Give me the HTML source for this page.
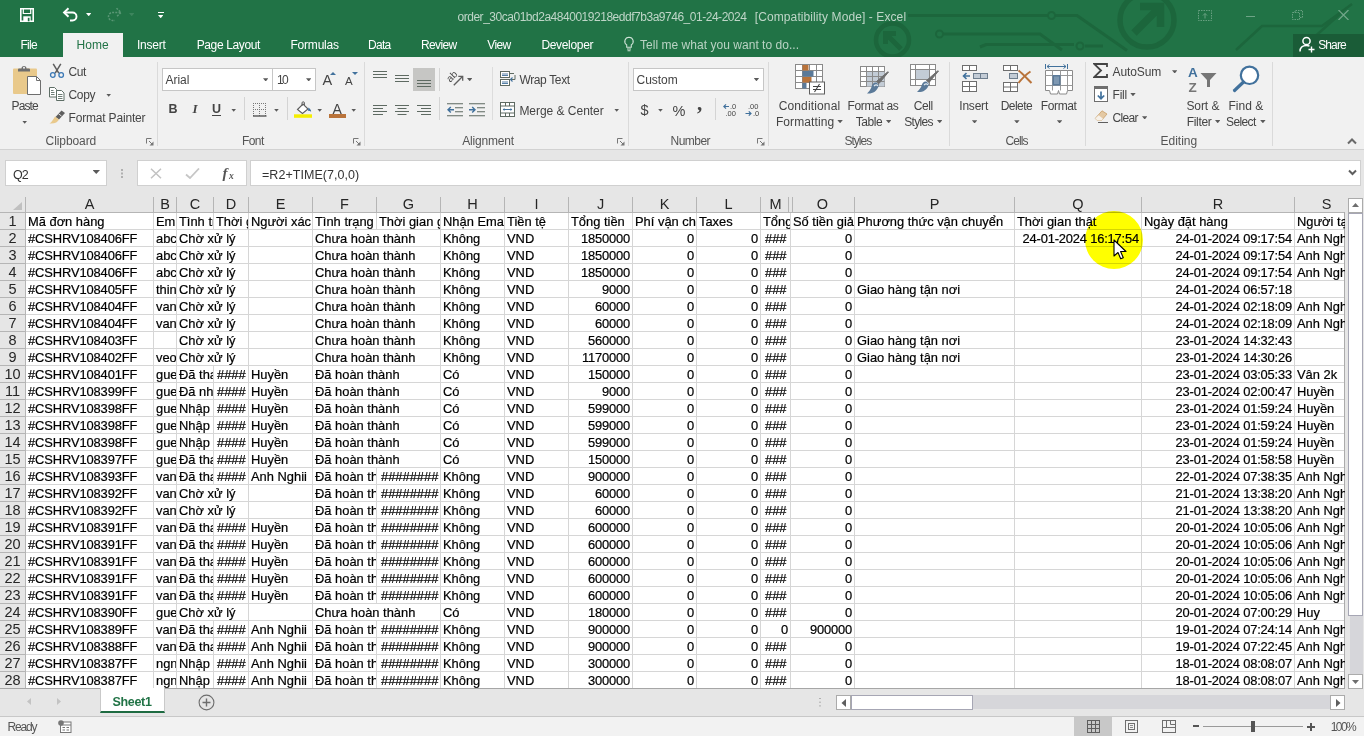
<!DOCTYPE html>
<html><head><meta charset="utf-8"><title>Excel</title>
<style>
*{box-sizing:border-box}
html,body{margin:0;padding:0}
body{width:1364px;height:736px;overflow:hidden;position:relative;background:#e6e6e6;font-family:"Liberation Sans",sans-serif;font-size:12px;color:#444}
.a{position:absolute}
.t{position:absolute;white-space:nowrap;font-size:12px;line-height:14px;color:#444}
.tc{position:absolute;white-space:nowrap;font-size:12.5px;line-height:14px;color:#444;text-align:center}
#titlebar{position:absolute;left:0;top:0;width:1364px;height:57px;background:#217346;overflow:hidden}
#ribbon{position:absolute;left:0;top:57px;width:1364px;height:93px;background:#f1f1f1;border-bottom:1px solid #d2d2d2}
.sep{position:absolute;top:62px;width:1px;height:84px;background:#dadada}
.ssep{position:absolute;width:1px;height:18px;background:#d4d4d4}
.grp{position:absolute;top:134px;font-size:12.5px;line-height:14px;color:#555;white-space:nowrap}
.dd{position:absolute;width:5.4px;height:3.2px;background:#5a5a5a;clip-path:polygon(0 0,100% 0,50% 100%)}
.box{position:absolute;background:#fff;border:1px solid #c6c6c6}
/* grid */
#grid{position:absolute;left:0;top:0;width:1364px;height:736px}
#sheet{position:absolute;left:26px;top:213px;width:1319px;height:476px;background:#fff}
.c{position:absolute;height:16px;line-height:17px;font-size:12.9px;color:#000;white-space:nowrap;overflow:hidden;padding:0 2px;-webkit-text-stroke:0.2px #000}
.ov{background:#fff}
.r{text-align:right;letter-spacing:-0.17px}
.n{letter-spacing:-0.11px}
.ch{position:absolute;top:196px;height:17px;line-height:17px;font-size:14.5px;color:#262626;text-align:center}
.rh{position:absolute;left:0;width:25px;height:17px;line-height:17px;font-size:14.5px;color:#262626;text-align:center}
.vl{position:absolute;top:213px;width:1px;height:476px;background:#d6d6d6}
.hvl{position:absolute;top:197px;width:1px;height:16px;background:#b5b5b5}
.hl{position:absolute;left:26px;width:1319px;height:1px;background:#d6d6d6}
.rhl{position:absolute;left:0;width:26px;height:1px;background:#b5b5b5}
</style></head><body>
<div id="titlebar">
<svg class="a" style="left:860px;top:0" width="504" height="57" viewBox="860 0 504 57" fill="none" stroke="#1c663c" stroke-width="3">
<circle cx="892.500" cy="40" r="16.500" stroke-width="4.500"/><path d="M901 49L885.500 33.500M885.500 44V33.500h10.500" stroke-width="5"/>
<path d="M908 15.500h140M1055 15.500h22l50 35"/><circle cx="1051.500" cy="15.500" r="3.500" stroke-width="2"/>
<path d="M943 34h97l22 16"/><circle cx="939.500" cy="34" r="3.500" stroke-width="2"/>
<path d="M980 47l6-2.500h88M1085 46h18"/><circle cx="1080" cy="46" r="3.500" stroke-width="2"/>
<circle cx="1147" cy="20" r="27" stroke-width="5.500"/><path d="M1134 33l26-26M1140 6.500h20.500v20.500" stroke-width="7.500"/>
<path d="M1236 50l26-24h60l30-22M1300 50l40-36" stroke-width="2.500"/>
</svg>
<!-- QAT -->
<svg class="a" style="left:20px;top:8px" width="14" height="14" viewBox="0 0 14 14"><path d="M.8 .8h12.400v12.400H.8z" fill="none" stroke="#fff" stroke-width="1.600"/><path d="M3.300 1v4.500h7.400V1" fill="none" stroke="#fff" stroke-width="1.200"/><rect x="3.300" y="8.300" width="7.400" height="5" fill="#fff"/><rect x="7.800" y="9.800" width="1.700" height="3.500" fill="#217346"/></svg>
<svg class="a" style="left:62px;top:7px" width="17" height="15" viewBox="0 0 17 15"><path d="M2.500 5.500h8a4 4 0 0 1 0 8H8" fill="none" stroke="#fff" stroke-width="1.900"/><path d="M6.500 1.200L2 5.500l4.500 4.300" fill="none" stroke="#fff" stroke-width="1.900"/></svg>
<div class="dd" style="left:86px;top:13px;background:#fff"></div>
<svg class="a" style="left:106px;top:7px;opacity:.25" width="17" height="15" viewBox="0 0 17 15"><path d="M14.500 5.500h-8a4 4 0 0 0 0 8H9" fill="none" stroke="#fff" stroke-width="1.500" stroke-dasharray="2 1.200"/><path d="M10.500 1.200L15 5.500l-4.500 4.300" fill="none" stroke="#fff" stroke-width="1.500" stroke-dasharray="2 1.200"/></svg>
<div class="dd" style="left:129px;top:13px;background:#fff;opacity:.13"></div>
<div class="a" style="left:158px;top:12px;width:6px;height:1px;background:#fff"></div>
<div class="dd" style="left:158px;top:15px;background:#fff"></div>
<div class="t" style="left:457.50px;top:10.00px;letter-spacing:-0.477px;color:#bfd6c8">order_30ca01bd2a4840019218eddf7b3a9746_01-24-2024</div>
<div class="t" style="left:754.80px;top:10.00px;letter-spacing:0.094px;color:#bfd6c8">[Compatibility Mode] - Excel</div>
<!-- window controls (ghosted) -->
<svg class="a" style="left:1198px;top:10px;opacity:.32" width="14" height="11" viewBox="0 0 14 11"><rect x=".5" y=".5" width="13" height="10" fill="none" stroke="#fff" stroke-dasharray="1.500 1"/><path d="M7 3.500v5M5 5.500l2-2 2 2" stroke="#fff" fill="none"/></svg>
<div class="a" style="left:1246px;top:16px;width:9px;height:1px;background:#fff;opacity:.35"></div>
<svg class="a" style="left:1292px;top:10px;opacity:.32" width="11" height="10" viewBox="0 0 11 10"><rect x=".5" y="2.500" width="7" height="7" fill="none" stroke="#fff" stroke-dasharray="1.500 1"/><path d="M3 2.500V.5h7.500v7H8" fill="none" stroke="#fff" stroke-dasharray="1.500 1"/></svg>
<svg class="a" style="left:1338px;top:10px;opacity:.36" width="11" height="10" viewBox="0 0 11 10"><path d="M.5 0l10 10M10.500 0L.5 10" stroke="#fff" stroke-width="1.200"/></svg>
<!-- tabs -->
<div class="a" style="left:63px;top:33px;width:60px;height:24px;background:#f1f1f1"></div>
<div class="t" style="left:20.50px;top:38.00px;letter-spacing:-0.721px;color:#fff">File</div>
<div class="t" style="left:76.50px;top:38.00px;letter-spacing:0.055px;color:#217346">Home</div>
<div class="t" style="left:137.00px;top:38.00px;letter-spacing:-0.236px;color:#fff">Insert</div>
<div class="t" style="left:196.70px;top:38.00px;letter-spacing:-0.375px;color:#fff">Page Layout</div>
<div class="t" style="left:290.50px;top:38.00px;letter-spacing:-0.216px;color:#fff">Formulas</div>
<div class="t" style="left:368.00px;top:38.00px;letter-spacing:-0.725px;color:#fff">Data</div>
<div class="t" style="left:421.00px;top:38.00px;letter-spacing:-0.636px;color:#fff">Review</div>
<div class="t" style="left:487.30px;top:38.00px;letter-spacing:-0.642px;color:#fff">View</div>
<div class="t" style="left:541.40px;top:38.00px;letter-spacing:-0.325px;color:#fff">Developer</div>
<svg class="a" style="left:623px;top:36px" width="12" height="16" viewBox="0 0 12 16"><path d="M6 1.200a4.200 4.200 0 0 0-2.300 7.700v2.300h4.600V8.900A4.200 4.200 0 0 0 6 1.200z" fill="none" stroke="#cfe3d7" stroke-width="1.100"/><path d="M4 13h4M4.500 14.800h3" stroke="#cfe3d7" stroke-width="1.100"/></svg>
<div class="t" style="left:640.00px;top:38.00px;letter-spacing:0.033px;color:#bad3c4">Tell me what you want to do...</div>
<div class="a" style="left:1293px;top:34px;width:71px;height:23px;background:#1a5c37"></div>
<svg class="a" style="left:1299px;top:36px" width="16" height="17" viewBox="0 0 16 17"><circle cx="7.500" cy="5" r="3.600" fill="none" stroke="#fff" stroke-width="1.500"/><path d="M1 15.500c0-4 2.600-6 6.500-6 1.200 0 2.200.2 3 .6" fill="none" stroke="#fff" stroke-width="1.500"/><path d="M12.500 10.500v6M9.500 13.500h6" stroke="#fff" stroke-width="1.400"/></svg>
<div class="t" style="left:1318.20px;top:38.00px;letter-spacing:-0.887px;color:#fff">Share</div>
</div>
<div id="ribbon"></div>
<!-- ===== Clipboard ===== -->
<svg class="a" id="ic-paste" style="left:12px;top:64px" width="30" height="32" viewBox="0 0 30 32">
<rect x="1" y="4.500" width="24" height="25.500" rx="1" fill="#e9c98b"/>
<path d="M6 7.500V5.500a1 1 0 0 1 1-1h2.500a2.500 2.500 0 0 1 5 0H17a1 1 0 0 1 1 1v2z" fill="#6e6e6e"/>
<circle cx="12" cy="3.800" r="1" fill="#f1f1f1"/>
<path d="M15.500 12.500h9l4 4V30.500h-13z" fill="#fff" stroke="#6e6e6e" stroke-width="1"/>
<path d="M24.500 12.500v4h4" fill="none" stroke="#6e6e6e" stroke-width="1"/>
</svg>
<div class="t" style="left:11.50px;top:99.00px;letter-spacing:-0.878px">Paste</div>
<div class="dd" style="left:22px;top:120.500px"></div>
<svg class="a" id="ic-cut" style="left:49px;top:63px" width="16" height="16" viewBox="0 0 16 16">
<path d="M4.200 .8l5.600 9.400M11.800 .8L6.200 10.200" stroke="#5e5e5e" stroke-width="1.500" fill="none"/>
<circle cx="3.800" cy="12" r="2.300" fill="none" stroke="#3b78b5" stroke-width="1.300"/><circle cx="12.200" cy="12" r="2.300" fill="none" stroke="#3b78b5" stroke-width="1.300"/>
</svg>
<div class="t" style="left:68.50px;top:65.00px;letter-spacing:-0.420px">Cut</div>
<svg class="a" id="ic-copy" style="left:49px;top:87px" width="16" height="14" viewBox="0 0 16 14">
<path d="M.5 .5h5l2 2v7.500h-7z" fill="#fff" stroke="#5e6e66" stroke-width="1"/><path d="M2 3.500h2.500M2 5.500h3.500M2 7.500h3.500" stroke="#5e6e66" stroke-width=".9"/>
<path d="M7.500 3.500h5l2.500 2.500v7.500H7.500z" fill="#fff" stroke="#5e6e66" stroke-width="1"/><path d="M9 7.500h4.500M9 9.500h4.500M9 11.500h4.500" stroke="#5e6e66" stroke-width=".9"/>
</svg>
<div class="t" style="left:68.50px;top:88.00px;letter-spacing:-0.305px">Copy</div>
<div class="dd" style="left:106px;top:93.500px"></div>
<svg class="a" id="ic-fp" style="left:49px;top:110px" width="17" height="15" viewBox="0 0 17 15">
<path d="M12.500 .5l3.500 2.500-6 6.500-3.500-2.500z" fill="#5e5e5e"/>
<path d="M6 6.500l4 3c-1 2.500-4.500 4.500-9.500 4 2.500-1.500 3.500-4 5.500-7z" fill="#e9c98b"/>
<path d="M9.500 3.800l3 2.200" stroke="#f1f1f1" stroke-width=".9"/>
</svg>
<div class="t" style="left:68.50px;top:111.00px;letter-spacing:-0.174px">Format Painter</div>
<div class="t" style="left:45.60px;top:134.00px;letter-spacing:-0.086px;color:#555">Clipboard</div>
<svg class="a launcher" style="left:146px;top:138px" width="8" height="8" viewBox="0 0 8 8"><path d="M.5 5.500V.5h5" fill="none" stroke="#777"/><path d="M3 3l4 4" stroke="#777"/><path d="M7.500 3.500v4h-4z" fill="#777"/></svg>
<div class="sep" style="left:157px"></div>
<!-- ===== Font ===== -->
<div class="box" style="left:162px;top:68px;width:111px;height:23px"></div>
<div class="t" style="left:165.60px;top:73.00px;letter-spacing:-0.047px">Arial</div>
<div class="dd" style="left:263px;top:78.300px"></div>
<div class="box" style="left:272px;top:68px;width:44px;height:23px"></div>
<div class="t" style="left:277.00px;top:73.00px;letter-spacing:-1.674px">10</div>
<div class="dd" style="left:306px;top:78.300px"></div>
<div class="t" style="left:322.50px;top:73.00px;font-size:14.5px">A</div>
<svg class="a" style="left:329.500px;top:72px" width="6" height="3" viewBox="0 0 6 3"><path d="M0 3l3-3 3 3z" fill="#41719c"/></svg>
<div class="t" style="left:345.00px;top:74.00px;font-size:11.5px">A</div>
<svg class="a" style="left:351.500px;top:72px" width="6" height="3" viewBox="0 0 6 3"><path d="M0 0l3 3 3-3z" fill="#41719c"/></svg>
<div class="t" style="left:168.50px;top:102.30px;font-size:12.5px;font-weight:bold">B</div>
<div class="t" style="left:192.50px;top:101.80px;font-size:13px;font-weight:bold;font-style:italic;font-family:'Liberation Serif',serif">I</div>
<div class="t" style="left:212.00px;top:102.30px;font-size:12.5px;font-weight:bold">U</div>
<div class="a" style="left:212px;top:115px;width:9px;height:1px;background:#444"></div>
<div class="dd" style="left:231px;top:108.600px"></div>
<div class="ssep" style="left:244px;top:97px;height:23px"></div>
<svg class="a" id="ic-border" style="left:253px;top:103px" width="14" height="14" viewBox="0 0 14 14"><path d="M.5 0v13M6.500 0v13M12.500 0v13M0 .5h13M0 6.500h13" stroke="#777" stroke-dasharray="1 1"/><path d="M0 13h13.500" stroke="#555" stroke-width="1.400"/></svg>
<div class="dd" style="left:273.750px;top:108.600px"></div>
<div class="ssep" style="left:287px;top:97px;height:23px"></div>
<svg class="a" id="ic-fill" style="left:294px;top:101px" width="19" height="17" viewBox="0 0 19 17"><path d="M3.500 8.500l5.500-5.500 5 5-5.500 4.500z" fill="#fff" stroke="#5e5e5e" stroke-width="1.100"/><path d="M8 5V2a1.200 1.200 0 0 1 2.400 0v2" fill="none" stroke="#5e5e5e" stroke-width="1"/><path d="M14.500 6.500c1.500 1.200 2.800 2.600 2.600 4.200-1-.8-2-1-3.200-.9z" fill="#41719c"/><rect x="0" y="13.300" width="18" height="3.500" fill="#f5ee00"/></svg>
<div class="dd" style="left:317px;top:108.600px"></div>
<div class="t" style="left:332.50px;top:101.60px;font-size:14px">A</div>
<div class="a" style="left:328.750px;top:114.300px;width:17px;height:3.700px;background:#b9733a"></div>
<div class="dd" style="left:351px;top:108.600px"></div>
<div class="t" style="left:241.90px;top:134.00px;letter-spacing:-0.526px;color:#555">Font</div>
<svg class="a launcher" style="left:353px;top:138px" width="8" height="8" viewBox="0 0 8 8"><path d="M.5 5.500V.5h5" fill="none" stroke="#777"/><path d="M3 3l4 4" stroke="#777"/><path d="M7.500 3.500v4h-4z" fill="#777"/></svg>
<div class="sep" style="left:364px"></div>
<!-- ===== Alignment ===== -->
<div class="a" style="left:413px;top:68px;width:22px;height:23px;background:#c6c6c4"></div>
<svg class="a" style="left:373px;top:70px" width="14" height="9" viewBox="0 0 14 9"><path d="M0 1.500h14M0 4.500h14M0 7.500h14" stroke="#5e6a62" stroke-width="1"/></svg>
<svg class="a" style="left:395px;top:74px" width="14" height="9" viewBox="0 0 14 9"><path d="M0 1.500h14M0 4.500h14M0 7.500h14" stroke="#5e6a62" stroke-width="1"/></svg>
<svg class="a" style="left:417px;top:79px" width="14" height="9" viewBox="0 0 14 9"><path d="M0 1.500h14M0 4.500h14M0 7.500h14" stroke="#5e6a62" stroke-width="1"/></svg>
<div class="ssep" style="left:439px;top:68px;height:23px"></div>
<svg class="a" id="ic-orient" style="left:446px;top:69px" width="19" height="19" viewBox="0 0 19 19"><text x="0" y="0" font-size="10" fill="#4a4a4a" transform="translate(4.200 13.800) rotate(-45)" font-family="Liberation Sans">ab</text><path d="M7.800 16.200L16.500 7.500" stroke="#5e5e5e" stroke-width="1.300"/><path d="M12.300 7.300l4.400 0 0 4.400" fill="none" stroke="#5e5e5e" stroke-width="1.300"/></svg>
<div class="dd" style="left:467px;top:78px"></div>
<svg class="a" id="ic-wrap" style="left:500px;top:71px" width="16" height="15" viewBox="0 0 16 15"><rect x=".5" y=".5" width="9" height="6" fill="#fff" stroke="#5e6a62"/><rect x=".5" y="8.500" width="9" height="6" fill="#fff" stroke="#5e6a62"/><path d="M2 3h6M2 4.500h6M2 11h6M2 12.500h6" stroke="#41719c" stroke-width=".9"/><path d="M9.500 2.500h4.500M15 4v4.500h-4.500" fill="none" stroke="#5e6a62" stroke-width="1"/><path d="M12.500 6.500l-2 2 2 2" fill="none" stroke="#41719c" stroke-width="1.100"/></svg>
<div class="t" style="left:519.40px;top:73.00px;letter-spacing:-0.358px">Wrap Text</div>
<svg class="a" style="left:373px;top:104px" width="14" height="12" viewBox="0 0 14 12"><path d="M0 1.500h14M0 4.500h10M0 7.500h14M0 10.500h10" stroke="#5e6a62" stroke-width="1"/></svg>
<svg class="a" style="left:395px;top:104px" width="14" height="12" viewBox="0 0 14 12"><path d="M0 1.500h14M2.500 4.500h9M0 7.500h14M2.500 10.500h9" stroke="#5e6a62" stroke-width="1"/></svg>
<svg class="a" style="left:417px;top:104px" width="14" height="12" viewBox="0 0 14 12"><path d="M0 1.500h14M4 4.500h10M0 7.500h14M4 10.500h10" stroke="#5e6a62" stroke-width="1"/></svg>
<div class="ssep" style="left:439px;top:97px;height:23px"></div>
<svg class="a" style="left:447px;top:103px" width="16" height="14" viewBox="0 0 16 14"><path d="M0 .8h16M8 4.800h8M8 8.800h8M0 12.800h16" stroke="#5e6a62" stroke-width="1.100"/><path d="M7 6.800H1M3.800 4L1 6.800l2.800 2.800" fill="none" stroke="#41719c" stroke-width="1.400"/></svg>
<svg class="a" style="left:469px;top:103px" width="16" height="14" viewBox="0 0 16 14"><path d="M0 .8h16M8 4.800h8M8 8.800h8M0 12.800h16" stroke="#5e6a62" stroke-width="1.100"/><path d="M0 6.800h6M3.200 4L6 6.800 3.200 9.600" fill="none" stroke="#41719c" stroke-width="1.400"/></svg>
<div class="ssep" style="left:492px;top:67px;height:53px;background:#dcdcdc"></div>
<svg class="a" id="ic-merge" style="left:500px;top:102px" width="15" height="15" viewBox="0 0 15 15"><rect x=".5" y=".5" width="14" height="14" fill="#fff" stroke="#5e6a62"/><path d="M.5 4h14M.5 11h14M5.500 .5v3.500M9.500 11v3.500M5.500 11v3.500M9.500 .5v3.500" stroke="#5e6a62"/><path d="M3 7.500h9" stroke="#41719c"/><path d="M4.500 6l-1.800 1.500 1.800 1.500zM10.500 6l1.800 1.500-1.800 1.500z" fill="#41719c"/></svg>
<div class="t" style="left:519.40px;top:104.00px;letter-spacing:-0.027px">Merge &amp; Center</div>
<div class="dd" style="left:614px;top:108.600px"></div>
<div class="t" style="left:462.25px;top:134.00px;letter-spacing:-0.191px;color:#555">Alignment</div>
<svg class="a launcher" style="left:617px;top:138px" width="8" height="8" viewBox="0 0 8 8"><path d="M.5 5.500V.5h5" fill="none" stroke="#777"/><path d="M3 3l4 4" stroke="#777"/><path d="M7.500 3.500v4h-4z" fill="#777"/></svg>
<div class="sep" style="left:628px"></div>
<!-- ===== Number ===== -->
<div class="box" style="left:633px;top:68px;width:131px;height:23px"></div>
<div class="t" style="left:636.50px;top:73.00px;letter-spacing:-0.020px">Custom</div>
<div class="dd" style="left:753.750px;top:78px"></div>
<div class="t" style="left:640.60px;top:102.50px;font-size:14.5px">$</div>
<div class="dd" style="left:657.750px;top:108.600px"></div>
<div class="t" style="left:672.50px;top:104.00px;font-size:14.5px">%</div>
<div class="t" style="left:697.00px;top:95.50px;font-size:21px;font-weight:bold;font-family:'Liberation Serif',serif">,</div>
<div class="ssep" style="left:715px;top:98px;height:22px"></div>
<svg class="a" id="ic-dec1" style="left:723px;top:103px" width="15" height="14" viewBox="0 0 15 14"><text x="7" y="6" font-size="7.500" fill="#444" font-family="Liberation Sans">.0</text><text x="2.500" y="13" font-size="7.500" fill="#444" font-family="Liberation Sans">.00</text><path d="M6 3.500H.8M3 1.300L.8 3.500 3 5.700" fill="none" stroke="#41719c" stroke-width="1.200"/></svg>
<svg class="a" id="ic-dec2" style="left:745px;top:103px" width="15" height="14" viewBox="0 0 15 14"><text x="3" y="6" font-size="7.500" fill="#444" font-family="Liberation Sans">.00</text><text x="8" y="13" font-size="7.500" fill="#444" font-family="Liberation Sans">.0</text><path d="M.5 10.500h5.500M3.800 8.300L6 10.500 3.800 12.700" fill="none" stroke="#41719c" stroke-width="1.200"/></svg>
<div class="t" style="left:670.60px;top:134.00px;letter-spacing:-0.537px;color:#555">Number</div>
<svg class="a launcher" style="left:756.500px;top:138px" width="8" height="8" viewBox="0 0 8 8"><path d="M.5 5.500V.5h5" fill="none" stroke="#777"/><path d="M3 3l4 4" stroke="#777"/><path d="M7.500 3.500v4h-4z" fill="#777"/></svg>
<div class="sep" style="left:768px"></div>
<!-- ===== Styles ===== -->
<svg class="a" id="ic-cf" style="left:795px;top:64px" width="31" height="31" viewBox="0 0 31 31"><rect x=".5" y=".5" width="27" height="24" fill="#fff" stroke="#8a8a8a"/><path d="M.5 6.500h27M.5 12.500h27M.5 18.500h27M7.500 .5v24M14.500 .5v24M21.500 .5v24" stroke="#8a8a8a"/><rect x="7.500" y="1" width="6" height="5.500" fill="#b9733a"/><rect x="7.500" y="7" width="11" height="5.500" fill="#5b7a99"/><rect x="7.500" y="13" width="9" height="5.500" fill="#b9733a"/><rect x="7.500" y="19" width="4" height="5.500" fill="#5b7a99"/><rect x="14.500" y="18" width="15" height="12" fill="#fff" stroke="#5e5e5e"/><path d="M18 22.500h8M18 25.500h8M24.500 20l-5 8" stroke="#444" stroke-width="1.100"/></svg>
<div class="t" style="left:778.65px;top:99.00px;letter-spacing:0.148px">Conditional</div>
<div class="t" style="left:775.90px;top:115.00px;letter-spacing:0.102px">Formatting</div>
<div class="dd" style="left:837.400px;top:120px"></div>
<svg class="a" id="ic-fat" style="left:860px;top:66px" width="30" height="30" viewBox="0 0 30 30"><rect x=".5" y=".5" width="24" height="20" fill="#fff" stroke="#8a8a8a"/><rect x="6.500" y="5.500" width="18" height="15" fill="#c3ccd6"/><path d="M.5 5.500h24M.5 10.500h24M.5 15.500h24M6.500 .5v20M12.500 .5v20M18.500 .5v20" stroke="#8a8a8a"/><path d="M28.500 6L19 17.500l-2.500-2L27.500 6z" fill="#6e6e6e" stroke="#6e6e6e"/><path d="M16.500 16.500c-2.500-.5-4.500 1.500-5 4.500-.8 2.500-2.500 4.500-4.500 6.500 5 .5 10-1.500 12-8.500z" fill="#5b7a99"/><path d="M14 20c1.500-1.500 3-1.500 4 0" stroke="#dfe7ee" fill="none" stroke-width="1.200"/></svg>
<div class="t" style="left:847.50px;top:99.00px;letter-spacing:-0.351px">Format as</div>
<div class="t" style="left:855.80px;top:115.00px;letter-spacing:-0.453px">Table</div>
<div class="dd" style="left:886px;top:120px"></div>
<svg class="a" id="ic-cs" style="left:910px;top:64px" width="30" height="30" viewBox="0 0 30 30"><rect x=".5" y=".5" width="25" height="21" fill="#fff" stroke="#8a8a8a"/><path d="M.5 5.500h25M.5 15.500h25M5.500 .5v21M19.500 .5v21" stroke="#8a8a8a"/><rect x="5.500" y="5.500" width="14" height="10" fill="#c3ccd6" stroke="#8a8a8a"/><path d="M28.500 7L19 18.500l-2.500-2L27.500 7z" fill="#6e6e6e" stroke="#6e6e6e"/><path d="M16.500 17.500c-2.500-.5-4.500 1.500-5 4.500-.8 2-2.500 4-4.500 6 5 .5 10-1 12-8z" fill="#5b7a99"/><path d="M14 21c1.500-1.500 3-1.500 4 0" stroke="#dfe7ee" fill="none" stroke-width="1.200"/></svg>
<div class="t" style="left:913.80px;top:99.00px;letter-spacing:-0.402px">Cell</div>
<div class="t" style="left:904.30px;top:115.00px;letter-spacing:-0.696px">Styles</div>
<div class="dd" style="left:937px;top:120px"></div>
<div class="t" style="left:844.40px;top:134.00px;letter-spacing:-0.966px;color:#555">Styles</div>
<div class="sep" style="left:949px"></div>
<!-- ===== Cells ===== -->
<svg class="a" id="ic-ins" style="left:962px;top:65px" width="27" height="28" viewBox="0 0 27 28"><rect x=".5" y=".5" width="14" height="5" fill="#fff" stroke="#6e6e6e"/><path d="M7.500 .5v5" stroke="#6e6e6e"/><rect x="11.500" y="8.500" width="14" height="5" fill="#c3ccd6" stroke="#6e7e8e"/><path d="M18.500 8.500v5" stroke="#6e7e8e"/><rect x=".5" y="16.500" width="14" height="10" fill="#fff" stroke="#6e6e6e"/><path d="M.5 21.500h14M7.500 16.500v10" stroke="#6e6e6e"/><path d="M8 11H1.500M4.500 8L1.500 11l3 3" fill="none" stroke="#41719c" stroke-width="1.600"/></svg>
<div class="t" style="left:959.30px;top:99.00px;letter-spacing:-0.216px">Insert</div>
<div class="dd" style="left:971.900px;top:120.300px"></div>
<svg class="a" id="ic-del" style="left:1003px;top:65px" width="30" height="28" viewBox="0 0 30 28"><rect x=".5" y=".5" width="14" height="5" fill="#fff" stroke="#6e6e6e"/><path d="M7.500 .5v5" stroke="#6e6e6e"/><rect x="6.500" y="8.500" width="8" height="5" fill="#c3ccd6" stroke="#6e7e8e"/><rect x=".5" y="17.500" width="14" height="9" fill="#fff" stroke="#6e6e6e"/><path d="M.5 22h14M7.500 17.500v9" stroke="#6e6e6e"/><path d="M15.500 5.500c4 3 8 7.500 13 12.500M27.500 6.500c-4 2.500-8 6.500-12 11.500" stroke="#b9733a" stroke-width="2" fill="none"/></svg>
<div class="t" style="left:1000.70px;top:99.00px;letter-spacing:-0.543px">Delete</div>
<div class="dd" style="left:1014.200px;top:120.300px"></div>
<svg class="a" id="ic-fmt" style="left:1045px;top:64px" width="28" height="31" viewBox="0 0 28 31"><path d="M.5 0v5M22.500 0v5M2 2.500h19M4.500 .5l-2.500 2 2.500 2M18.500 .5l2.500 2-2.500 2" fill="none" stroke="#41719c" stroke-width="1"/><path d="M.5 6.500h27v20h-5l-1 3.500h-7l-1-3.500h-0l-1 3.500h-7l-1-3.500H.5z" fill="#fff" stroke="#8a8a8a"/><path d="M.5 11.500h27M.5 21.500h27M7.500 6.500v20M15.500 6.500v20M22.500 6.500v20" stroke="#9a9a9a"/><rect x="7.500" y="11" width="8" height="10.500" fill="#5b7a99"/><rect x="9" y="12.500" width="5" height="7.500" fill="#7e98b2"/></svg>
<div class="t" style="left:1040.80px;top:99.00px;letter-spacing:-0.374px">Format</div>
<div class="dd" style="left:1056.900px;top:120.300px"></div>
<div class="t" style="left:1005.60px;top:134.00px;letter-spacing:-0.918px;color:#555">Cells</div>
<div class="sep" style="left:1085px"></div>
<!-- ===== Editing ===== -->
<svg class="a" id="ic-sum" style="left:1093px;top:63px" width="15" height="15" viewBox="0 0 15 15"><path d="M14 4V1H1.200L8 7.500 1.200 14H14v-3" fill="none" stroke="#444" stroke-width="1.800"/></svg>
<div class="t" style="left:1112.60px;top:65.00px;letter-spacing:-0.111px">AutoSum</div>
<div class="dd" style="left:1172px;top:70.300px"></div>
<svg class="a" id="ic-fillb" style="left:1094px;top:86px" width="14" height="16" viewBox="0 0 14 16"><rect x=".5" y=".5" width="13" height="15" fill="#fff" stroke="#6e6e6e"/><rect x=".5" y=".5" width="13" height="2.500" fill="#6e6e6e"/><path d="M7 5.500v7M3.800 9.500L7 12.700l3.200-3.200" fill="none" stroke="#41719c" stroke-width="1.700"/></svg>
<div class="t" style="left:1112.60px;top:88.00px;letter-spacing:-0.254px">Fill</div>
<div class="dd" style="left:1130.300px;top:93px"></div>
<svg class="a" id="ic-clear" style="left:1094px;top:110px" width="15" height="13" viewBox="0 0 15 13"><path d="M8 .8l5 3.200-5.500 6.500H3.500L1.200 8.500z" fill="#e4c9a4" stroke="#c9a06a" stroke-width=".8"/><path d="M1.200 8.500l2.300 2h4l1.500-1.800-4.300-3.400z" fill="#f6f1ea"/><path d="M4 12.500h10" stroke="#5e5e5e" stroke-width="1"/></svg>
<div class="t" style="left:1112.60px;top:111.00px;letter-spacing:-0.670px">Clear</div>
<div class="dd" style="left:1142px;top:116.200px"></div>
<svg class="a" id="ic-sort" style="left:1187px;top:64px" width="32" height="30" viewBox="0 0 32 30"><text x="1" y="13" font-size="13.500" font-weight="bold" fill="#41719c" font-family="Liberation Sans">A</text><text x="1.500" y="28" font-size="13.500" font-weight="bold" fill="#767676" font-family="Liberation Sans">Z</text><path d="M13.500 9h16l-6.500 7v7h-3v-7z" fill="#767676"/></svg>
<div class="t" style="left:1186.40px;top:99.00px;letter-spacing:-0.068px">Sort &amp;</div>
<div class="t" style="left:1186.70px;top:115.00px;letter-spacing:-0.314px">Filter</div>
<div class="dd" style="left:1215px;top:120px"></div>
<svg class="a" id="ic-find" style="left:1232px;top:64px" width="29" height="29" viewBox="0 0 29 29"><circle cx="17.500" cy="11.300" r="8.700" fill="#fff" stroke="#41719c" stroke-width="2.200"/><path d="M11.500 18L2.500 26.500" stroke="#41719c" stroke-width="3.200" stroke-linecap="round"/></svg>
<div class="t" style="left:1228.50px;top:99.00px;letter-spacing:0.024px">Find &amp;</div>
<div class="t" style="left:1226.00px;top:115.00px;letter-spacing:-0.604px">Select</div>
<div class="dd" style="left:1260.200px;top:120px"></div>
<div class="t" style="left:1160.60px;top:134.00px;letter-spacing:-0.036px;color:#555">Editing</div>
<div class="sep" style="left:1272px"></div>
<svg class="a" style="left:1346.500px;top:137px" width="10" height="8" viewBox="0 0 10 8"><path d="M1 6.500l4-4 4 4" fill="none" stroke="#6a6a6a" stroke-width="2"/></svg>
<!-- formula bar -->
<div class="box" style="left:5px;top:160px;width:102px;height:26px;border-color:#d0d0d0"></div>
<div class="t" style="left:12.90px;top:168.00px;letter-spacing:-0.923px;font-size:12.5px;color:#333">Q2</div>
<div class="dd" style="left:92.500px;top:170px;width:7.500px;height:4px"></div>
<div class="a" style="left:121px;top:169px;width:1.500px;height:1.500px;background:#b0b0b0;box-shadow:0 3.500px 0 #b0b0b0,0 7px 0 #b0b0b0"></div>
<div class="box" style="left:137px;top:160px;width:110px;height:26px;border-color:#d0d0d0"></div>
<svg class="a" style="left:150px;top:168px" width="12" height="11" viewBox="0 0 12 11"><path d="M1 .8l10 9.400M11 .8L1 10.200" stroke="#c2c2c2" stroke-width="1.500"/></svg>
<svg class="a" style="left:185px;top:168px" width="15" height="11" viewBox="0 0 15 11"><path d="M1 6.500l4 3.500 9-9.500" fill="none" stroke="#c6c6c6" stroke-width="1.800"/></svg>
<div class="t" style="left:222.50px;top:166.00px;font-size:15px;font-weight:bold;font-style:italic;color:#555;font-family:'Liberation Serif',serif">f</div>
<div class="t" style="left:229.00px;top:168.80px;font-size:9.5px;font-weight:bold;font-style:italic;color:#555;font-family:'Liberation Serif',serif">x</div>
<div class="box" style="left:250px;top:160px;width:1111px;height:26px;border-color:#d0d0d0"></div>
<div class="t" style="left:262.00px;top:168.00px;letter-spacing:0.043px;font-size:12.5px;color:#333">=R2+TIME(7,0,0)</div>
<svg class="a" style="left:1348px;top:168.500px" width="9" height="7" viewBox="0 0 9 7"><path d="M1 1.500l3.500 3.500 3.500-3.500" fill="none" stroke="#5e5e5e" stroke-width="2"/></svg>
<div id="grid">
<div id="sheet"></div>
<div class="vl" style="left:153px"></div>
<div class="hvl" style="left:153px"></div>
<div class="vl" style="left:176px"></div>
<div class="hvl" style="left:176px"></div>
<div class="vl" style="left:213px"></div>
<div class="hvl" style="left:213px"></div>
<div class="vl" style="left:248px"></div>
<div class="hvl" style="left:248px"></div>
<div class="vl" style="left:312px"></div>
<div class="hvl" style="left:312px"></div>
<div class="vl" style="left:376px"></div>
<div class="hvl" style="left:376px"></div>
<div class="vl" style="left:440px"></div>
<div class="hvl" style="left:440px"></div>
<div class="vl" style="left:504px"></div>
<div class="hvl" style="left:504px"></div>
<div class="vl" style="left:568px"></div>
<div class="hvl" style="left:568px"></div>
<div class="vl" style="left:632px"></div>
<div class="hvl" style="left:632px"></div>
<div class="vl" style="left:696px"></div>
<div class="hvl" style="left:696px"></div>
<div class="vl" style="left:760px"></div>
<div class="hvl" style="left:760px"></div>
<div class="vl" style="left:790px"></div>
<div class="hvl" style="left:788px"></div>
<div class="hvl" style="left:792px"></div>
<div class="vl" style="left:854px"></div>
<div class="hvl" style="left:854px"></div>
<div class="vl" style="left:1014px"></div>
<div class="hvl" style="left:1014px"></div>
<div class="vl" style="left:1141px"></div>
<div class="hvl" style="left:1141px"></div>
<div class="vl" style="left:1294px"></div>
<div class="hvl" style="left:1294px"></div>
<div class="vl" style="left:1345px"></div>
<div class="hvl" style="left:1345px"></div>
<div class="hl" style="top:229px"></div>
<div class="rhl" style="top:229px"></div>
<div class="hl" style="top:246px"></div>
<div class="rhl" style="top:246px"></div>
<div class="hl" style="top:263px"></div>
<div class="rhl" style="top:263px"></div>
<div class="hl" style="top:280px"></div>
<div class="rhl" style="top:280px"></div>
<div class="hl" style="top:297px"></div>
<div class="rhl" style="top:297px"></div>
<div class="hl" style="top:314px"></div>
<div class="rhl" style="top:314px"></div>
<div class="hl" style="top:331px"></div>
<div class="rhl" style="top:331px"></div>
<div class="hl" style="top:348px"></div>
<div class="rhl" style="top:348px"></div>
<div class="hl" style="top:365px"></div>
<div class="rhl" style="top:365px"></div>
<div class="hl" style="top:382px"></div>
<div class="rhl" style="top:382px"></div>
<div class="hl" style="top:399px"></div>
<div class="rhl" style="top:399px"></div>
<div class="hl" style="top:416px"></div>
<div class="rhl" style="top:416px"></div>
<div class="hl" style="top:433px"></div>
<div class="rhl" style="top:433px"></div>
<div class="hl" style="top:450px"></div>
<div class="rhl" style="top:450px"></div>
<div class="hl" style="top:467px"></div>
<div class="rhl" style="top:467px"></div>
<div class="hl" style="top:484px"></div>
<div class="rhl" style="top:484px"></div>
<div class="hl" style="top:501px"></div>
<div class="rhl" style="top:501px"></div>
<div class="hl" style="top:518px"></div>
<div class="rhl" style="top:518px"></div>
<div class="hl" style="top:535px"></div>
<div class="rhl" style="top:535px"></div>
<div class="hl" style="top:552px"></div>
<div class="rhl" style="top:552px"></div>
<div class="hl" style="top:569px"></div>
<div class="rhl" style="top:569px"></div>
<div class="hl" style="top:586px"></div>
<div class="rhl" style="top:586px"></div>
<div class="hl" style="top:603px"></div>
<div class="rhl" style="top:603px"></div>
<div class="hl" style="top:620px"></div>
<div class="rhl" style="top:620px"></div>
<div class="hl" style="top:637px"></div>
<div class="rhl" style="top:637px"></div>
<div class="hl" style="top:654px"></div>
<div class="rhl" style="top:654px"></div>
<div class="hl" style="top:671px"></div>
<div class="rhl" style="top:671px"></div>
<div class="hl" style="top:688px"></div>
<div class="rhl" style="top:688px"></div>
<svg class="a" style="left:13px;top:201.500px" width="9" height="8" viewBox="0 0 9 8"><path d="M9 0v8H0z" fill="#c0c0c0"/></svg>
<div class="a" style="left:25px;top:197px;width:1px;height:492px;background:#b5b5b5"></div>
<div class="a" style="left:0;top:212px;width:1345px;height:1px;background:#b5b5b5"></div>
<div class="a" style="left:1344px;top:212px;width:1px;height:477px;background:#ababab"></div>
<div class="a" style="left:0;top:688px;width:1346px;height:1px;background:#a6a6a6"></div>
<!-- highlight circle -->
<div class="a" style="left:1085px;top:211px;width:58px;height:58px;border-radius:50%;background:#ffff00;mix-blend-mode:multiply"></div>

<div class="c" style="left:26px;top:213px;width:127px">Mã đơn hàng</div>
<div class="c" style="left:154px;top:213px;width:22px">Em</div>
<div class="c" style="left:177px;top:213px;width:36px">Tình tr</div>
<div class="c" style="left:214px;top:213px;width:34px">Thời g</div>
<div class="c" style="left:249px;top:213px;width:63px">Người xác</div>
<div class="c" style="left:313px;top:213px;width:63px">Tình trạng</div>
<div class="c" style="left:377px;top:213px;width:63px">Thời gian g</div>
<div class="c" style="left:441px;top:213px;width:63px">Nhận Ema</div>
<div class="c" style="left:505px;top:213px;width:63px">Tiền tệ</div>
<div class="c" style="left:569px;top:213px;width:63px">Tổng tiền</div>
<div class="c" style="left:633px;top:213px;width:63px">Phí vận ch</div>
<div class="c" style="left:697px;top:213px;width:63px">Taxes</div>
<div class="c" style="left:761px;top:213px;width:29px">Tổng</div>
<div class="c" style="left:791px;top:213px;width:63px">Số tiền giả</div>
<div class="c" style="left:855px;top:213px;width:159px">Phương thức vận chuyển</div>
<div class="c" style="left:1015px;top:213px;width:126px">Thời gian thật</div>
<div class="c" style="left:1142px;top:213px;width:152px">Ngày đặt hàng</div>
<div class="c" style="left:1295px;top:213px;width:50px">Người tạ</div>
<div class="c n" style="left:26px;top:230px;width:127px">#CSHRV108406FF</div>
<div class="c" style="left:154px;top:230px;width:22px">abc</div>
<div class="c ov" style="left:177px;top:230px;width:71px">Chờ xử lý</div>
<div class="c ov" style="left:313px;top:230px;width:127px">Chưa hoàn thành</div>
<div class="c" style="left:441px;top:230px;width:63px">Không</div>
<div class="c" style="left:505px;top:230px;width:63px">VND</div>
<div class="c r" style="left:569px;top:230px;width:63px">1850000</div>
<div class="c r" style="left:633px;top:230px;width:63px">0</div>
<div class="c r" style="left:697px;top:230px;width:63px">0</div>
<div class="c" style="left:763px;top:230px;width:27px">###</div>
<div class="c r" style="left:791px;top:230px;width:63px">0</div>
<div class="c r" style="left:1142px;top:230px;width:152px">24-01-2024 09:17:54</div>
<div class="c" style="left:1295px;top:230px;width:50px">Anh Ngh</div>
<div class="c n" style="left:26px;top:247px;width:127px">#CSHRV108406FF</div>
<div class="c" style="left:154px;top:247px;width:22px">abc</div>
<div class="c ov" style="left:177px;top:247px;width:71px">Chờ xử lý</div>
<div class="c ov" style="left:313px;top:247px;width:127px">Chưa hoàn thành</div>
<div class="c" style="left:441px;top:247px;width:63px">Không</div>
<div class="c" style="left:505px;top:247px;width:63px">VND</div>
<div class="c r" style="left:569px;top:247px;width:63px">1850000</div>
<div class="c r" style="left:633px;top:247px;width:63px">0</div>
<div class="c r" style="left:697px;top:247px;width:63px">0</div>
<div class="c" style="left:763px;top:247px;width:27px">###</div>
<div class="c r" style="left:791px;top:247px;width:63px">0</div>
<div class="c r" style="left:1142px;top:247px;width:152px">24-01-2024 09:17:54</div>
<div class="c" style="left:1295px;top:247px;width:50px">Anh Ngh</div>
<div class="c n" style="left:26px;top:264px;width:127px">#CSHRV108406FF</div>
<div class="c" style="left:154px;top:264px;width:22px">abc</div>
<div class="c ov" style="left:177px;top:264px;width:71px">Chờ xử lý</div>
<div class="c ov" style="left:313px;top:264px;width:127px">Chưa hoàn thành</div>
<div class="c" style="left:441px;top:264px;width:63px">Không</div>
<div class="c" style="left:505px;top:264px;width:63px">VND</div>
<div class="c r" style="left:569px;top:264px;width:63px">1850000</div>
<div class="c r" style="left:633px;top:264px;width:63px">0</div>
<div class="c r" style="left:697px;top:264px;width:63px">0</div>
<div class="c" style="left:763px;top:264px;width:27px">###</div>
<div class="c r" style="left:791px;top:264px;width:63px">0</div>
<div class="c r" style="left:1142px;top:264px;width:152px">24-01-2024 09:17:54</div>
<div class="c" style="left:1295px;top:264px;width:50px">Anh Ngh</div>
<div class="c n" style="left:26px;top:281px;width:127px">#CSHRV108405FF</div>
<div class="c" style="left:154px;top:281px;width:22px">thin</div>
<div class="c ov" style="left:177px;top:281px;width:71px">Chờ xử lý</div>
<div class="c ov" style="left:313px;top:281px;width:127px">Chưa hoàn thành</div>
<div class="c" style="left:441px;top:281px;width:63px">Không</div>
<div class="c" style="left:505px;top:281px;width:63px">VND</div>
<div class="c r" style="left:569px;top:281px;width:63px">9000</div>
<div class="c r" style="left:633px;top:281px;width:63px">0</div>
<div class="c r" style="left:697px;top:281px;width:63px">0</div>
<div class="c" style="left:763px;top:281px;width:27px">###</div>
<div class="c r" style="left:791px;top:281px;width:63px">0</div>
<div class="c" style="left:855px;top:281px;width:159px">Giao hàng tận nơi</div>
<div class="c r" style="left:1142px;top:281px;width:152px">24-01-2024 06:57:18</div>
<div class="c n" style="left:26px;top:298px;width:127px">#CSHRV108404FF</div>
<div class="c" style="left:154px;top:298px;width:22px">van</div>
<div class="c ov" style="left:177px;top:298px;width:71px">Chờ xử lý</div>
<div class="c ov" style="left:313px;top:298px;width:127px">Chưa hoàn thành</div>
<div class="c" style="left:441px;top:298px;width:63px">Không</div>
<div class="c" style="left:505px;top:298px;width:63px">VND</div>
<div class="c r" style="left:569px;top:298px;width:63px">60000</div>
<div class="c r" style="left:633px;top:298px;width:63px">0</div>
<div class="c r" style="left:697px;top:298px;width:63px">0</div>
<div class="c" style="left:763px;top:298px;width:27px">###</div>
<div class="c r" style="left:791px;top:298px;width:63px">0</div>
<div class="c r" style="left:1142px;top:298px;width:152px">24-01-2024 02:18:09</div>
<div class="c" style="left:1295px;top:298px;width:50px">Anh Ngh</div>
<div class="c n" style="left:26px;top:315px;width:127px">#CSHRV108404FF</div>
<div class="c" style="left:154px;top:315px;width:22px">van</div>
<div class="c ov" style="left:177px;top:315px;width:71px">Chờ xử lý</div>
<div class="c ov" style="left:313px;top:315px;width:127px">Chưa hoàn thành</div>
<div class="c" style="left:441px;top:315px;width:63px">Không</div>
<div class="c" style="left:505px;top:315px;width:63px">VND</div>
<div class="c r" style="left:569px;top:315px;width:63px">60000</div>
<div class="c r" style="left:633px;top:315px;width:63px">0</div>
<div class="c r" style="left:697px;top:315px;width:63px">0</div>
<div class="c" style="left:763px;top:315px;width:27px">###</div>
<div class="c r" style="left:791px;top:315px;width:63px">0</div>
<div class="c r" style="left:1142px;top:315px;width:152px">24-01-2024 02:18:09</div>
<div class="c" style="left:1295px;top:315px;width:50px">Anh Ngh</div>
<div class="c n" style="left:26px;top:332px;width:127px">#CSHRV108403FF</div>
<div class="c ov" style="left:177px;top:332px;width:71px">Chờ xử lý</div>
<div class="c ov" style="left:313px;top:332px;width:127px">Chưa hoàn thành</div>
<div class="c" style="left:441px;top:332px;width:63px">Không</div>
<div class="c" style="left:505px;top:332px;width:63px">VND</div>
<div class="c r" style="left:569px;top:332px;width:63px">560000</div>
<div class="c r" style="left:633px;top:332px;width:63px">0</div>
<div class="c r" style="left:697px;top:332px;width:63px">0</div>
<div class="c" style="left:763px;top:332px;width:27px">###</div>
<div class="c r" style="left:791px;top:332px;width:63px">0</div>
<div class="c" style="left:855px;top:332px;width:159px">Giao hàng tận nơi</div>
<div class="c r" style="left:1142px;top:332px;width:152px">23-01-2024 14:32:43</div>
<div class="c n" style="left:26px;top:349px;width:127px">#CSHRV108402FF</div>
<div class="c" style="left:154px;top:349px;width:22px">veo</div>
<div class="c ov" style="left:177px;top:349px;width:71px">Chờ xử lý</div>
<div class="c ov" style="left:313px;top:349px;width:127px">Chưa hoàn thành</div>
<div class="c" style="left:441px;top:349px;width:63px">Không</div>
<div class="c" style="left:505px;top:349px;width:63px">VND</div>
<div class="c r" style="left:569px;top:349px;width:63px">1170000</div>
<div class="c r" style="left:633px;top:349px;width:63px">0</div>
<div class="c r" style="left:697px;top:349px;width:63px">0</div>
<div class="c" style="left:763px;top:349px;width:27px">###</div>
<div class="c r" style="left:791px;top:349px;width:63px">0</div>
<div class="c" style="left:855px;top:349px;width:159px">Giao hàng tận nơi</div>
<div class="c r" style="left:1142px;top:349px;width:152px">23-01-2024 14:30:26</div>
<div class="c n" style="left:26px;top:366px;width:127px">#CSHRV108401FF</div>
<div class="c" style="left:154px;top:366px;width:22px">gue</div>
<div class="c" style="left:177px;top:366px;width:36px">Đã tha</div>
<div class="c" style="left:215px;top:366px;width:33px">####</div>
<div class="c" style="left:249px;top:366px;width:63px">Huyền</div>
<div class="c ov" style="left:313px;top:366px;width:127px">Đã hoàn thành</div>
<div class="c" style="left:441px;top:366px;width:63px">Có</div>
<div class="c" style="left:505px;top:366px;width:63px">VND</div>
<div class="c r" style="left:569px;top:366px;width:63px">150000</div>
<div class="c r" style="left:633px;top:366px;width:63px">0</div>
<div class="c r" style="left:697px;top:366px;width:63px">0</div>
<div class="c" style="left:763px;top:366px;width:27px">###</div>
<div class="c r" style="left:791px;top:366px;width:63px">0</div>
<div class="c r" style="left:1142px;top:366px;width:152px">23-01-2024 03:05:33</div>
<div class="c" style="left:1295px;top:366px;width:50px">Vân 2k</div>
<div class="c n" style="left:26px;top:383px;width:127px">#CSHRV108399FF</div>
<div class="c" style="left:154px;top:383px;width:22px">gue</div>
<div class="c" style="left:177px;top:383px;width:36px">Đã nh</div>
<div class="c" style="left:215px;top:383px;width:33px">####</div>
<div class="c" style="left:249px;top:383px;width:63px">Huyền</div>
<div class="c ov" style="left:313px;top:383px;width:127px">Đã hoàn thành</div>
<div class="c" style="left:441px;top:383px;width:63px">Có</div>
<div class="c" style="left:505px;top:383px;width:63px">VND</div>
<div class="c r" style="left:569px;top:383px;width:63px">9000</div>
<div class="c r" style="left:633px;top:383px;width:63px">0</div>
<div class="c r" style="left:697px;top:383px;width:63px">0</div>
<div class="c" style="left:763px;top:383px;width:27px">###</div>
<div class="c r" style="left:791px;top:383px;width:63px">0</div>
<div class="c r" style="left:1142px;top:383px;width:152px">23-01-2024 02:00:47</div>
<div class="c" style="left:1295px;top:383px;width:50px">Huyền</div>
<div class="c n" style="left:26px;top:400px;width:127px">#CSHRV108398FF</div>
<div class="c" style="left:154px;top:400px;width:22px">gue</div>
<div class="c" style="left:177px;top:400px;width:36px">Nhập</div>
<div class="c" style="left:215px;top:400px;width:33px">####</div>
<div class="c" style="left:249px;top:400px;width:63px">Huyền</div>
<div class="c ov" style="left:313px;top:400px;width:127px">Đã hoàn thành</div>
<div class="c" style="left:441px;top:400px;width:63px">Có</div>
<div class="c" style="left:505px;top:400px;width:63px">VND</div>
<div class="c r" style="left:569px;top:400px;width:63px">599000</div>
<div class="c r" style="left:633px;top:400px;width:63px">0</div>
<div class="c r" style="left:697px;top:400px;width:63px">0</div>
<div class="c" style="left:763px;top:400px;width:27px">###</div>
<div class="c r" style="left:791px;top:400px;width:63px">0</div>
<div class="c r" style="left:1142px;top:400px;width:152px">23-01-2024 01:59:24</div>
<div class="c" style="left:1295px;top:400px;width:50px">Huyền</div>
<div class="c n" style="left:26px;top:417px;width:127px">#CSHRV108398FF</div>
<div class="c" style="left:154px;top:417px;width:22px">gue</div>
<div class="c" style="left:177px;top:417px;width:36px">Nhập</div>
<div class="c" style="left:215px;top:417px;width:33px">####</div>
<div class="c" style="left:249px;top:417px;width:63px">Huyền</div>
<div class="c ov" style="left:313px;top:417px;width:127px">Đã hoàn thành</div>
<div class="c" style="left:441px;top:417px;width:63px">Có</div>
<div class="c" style="left:505px;top:417px;width:63px">VND</div>
<div class="c r" style="left:569px;top:417px;width:63px">599000</div>
<div class="c r" style="left:633px;top:417px;width:63px">0</div>
<div class="c r" style="left:697px;top:417px;width:63px">0</div>
<div class="c" style="left:763px;top:417px;width:27px">###</div>
<div class="c r" style="left:791px;top:417px;width:63px">0</div>
<div class="c r" style="left:1142px;top:417px;width:152px">23-01-2024 01:59:24</div>
<div class="c" style="left:1295px;top:417px;width:50px">Huyền</div>
<div class="c n" style="left:26px;top:434px;width:127px">#CSHRV108398FF</div>
<div class="c" style="left:154px;top:434px;width:22px">gue</div>
<div class="c" style="left:177px;top:434px;width:36px">Nhập</div>
<div class="c" style="left:215px;top:434px;width:33px">####</div>
<div class="c" style="left:249px;top:434px;width:63px">Huyền</div>
<div class="c ov" style="left:313px;top:434px;width:127px">Đã hoàn thành</div>
<div class="c" style="left:441px;top:434px;width:63px">Có</div>
<div class="c" style="left:505px;top:434px;width:63px">VND</div>
<div class="c r" style="left:569px;top:434px;width:63px">599000</div>
<div class="c r" style="left:633px;top:434px;width:63px">0</div>
<div class="c r" style="left:697px;top:434px;width:63px">0</div>
<div class="c" style="left:763px;top:434px;width:27px">###</div>
<div class="c r" style="left:791px;top:434px;width:63px">0</div>
<div class="c r" style="left:1142px;top:434px;width:152px">23-01-2024 01:59:24</div>
<div class="c" style="left:1295px;top:434px;width:50px">Huyền</div>
<div class="c n" style="left:26px;top:451px;width:127px">#CSHRV108397FF</div>
<div class="c" style="left:154px;top:451px;width:22px">gue</div>
<div class="c" style="left:177px;top:451px;width:36px">Đã tha</div>
<div class="c" style="left:215px;top:451px;width:33px">####</div>
<div class="c" style="left:249px;top:451px;width:63px">Huyền</div>
<div class="c ov" style="left:313px;top:451px;width:127px">Đã hoàn thành</div>
<div class="c" style="left:441px;top:451px;width:63px">Có</div>
<div class="c" style="left:505px;top:451px;width:63px">VND</div>
<div class="c r" style="left:569px;top:451px;width:63px">150000</div>
<div class="c r" style="left:633px;top:451px;width:63px">0</div>
<div class="c r" style="left:697px;top:451px;width:63px">0</div>
<div class="c" style="left:763px;top:451px;width:27px">###</div>
<div class="c r" style="left:791px;top:451px;width:63px">0</div>
<div class="c r" style="left:1142px;top:451px;width:152px">23-01-2024 01:58:58</div>
<div class="c" style="left:1295px;top:451px;width:50px">Huyền</div>
<div class="c n" style="left:26px;top:468px;width:127px">#CSHRV108393FF</div>
<div class="c" style="left:154px;top:468px;width:22px">van</div>
<div class="c" style="left:177px;top:468px;width:36px">Đã tha</div>
<div class="c" style="left:215px;top:468px;width:33px">####</div>
<div class="c" style="left:249px;top:468px;width:63px">Anh Nghii</div>
<div class="c" style="left:313px;top:468px;width:63px">Đã hoàn thành</div>
<div class="c" style="left:379px;top:468px;width:61px">########</div>
<div class="c" style="left:441px;top:468px;width:63px">Không</div>
<div class="c" style="left:505px;top:468px;width:63px">VND</div>
<div class="c r" style="left:569px;top:468px;width:63px">900000</div>
<div class="c r" style="left:633px;top:468px;width:63px">0</div>
<div class="c r" style="left:697px;top:468px;width:63px">0</div>
<div class="c" style="left:763px;top:468px;width:27px">###</div>
<div class="c r" style="left:791px;top:468px;width:63px">0</div>
<div class="c r" style="left:1142px;top:468px;width:152px">22-01-2024 07:38:35</div>
<div class="c" style="left:1295px;top:468px;width:50px">Anh Ngh</div>
<div class="c n" style="left:26px;top:485px;width:127px">#CSHRV108392FF</div>
<div class="c" style="left:154px;top:485px;width:22px">van</div>
<div class="c ov" style="left:177px;top:485px;width:71px">Chờ xử lý</div>
<div class="c" style="left:313px;top:485px;width:63px">Đã hoàn thành</div>
<div class="c" style="left:379px;top:485px;width:61px">########</div>
<div class="c" style="left:441px;top:485px;width:63px">Không</div>
<div class="c" style="left:505px;top:485px;width:63px">VND</div>
<div class="c r" style="left:569px;top:485px;width:63px">60000</div>
<div class="c r" style="left:633px;top:485px;width:63px">0</div>
<div class="c r" style="left:697px;top:485px;width:63px">0</div>
<div class="c" style="left:763px;top:485px;width:27px">###</div>
<div class="c r" style="left:791px;top:485px;width:63px">0</div>
<div class="c r" style="left:1142px;top:485px;width:152px">21-01-2024 13:38:20</div>
<div class="c" style="left:1295px;top:485px;width:50px">Anh Ngh</div>
<div class="c n" style="left:26px;top:502px;width:127px">#CSHRV108392FF</div>
<div class="c" style="left:154px;top:502px;width:22px">van</div>
<div class="c ov" style="left:177px;top:502px;width:71px">Chờ xử lý</div>
<div class="c" style="left:313px;top:502px;width:63px">Đã hoàn thành</div>
<div class="c" style="left:379px;top:502px;width:61px">########</div>
<div class="c" style="left:441px;top:502px;width:63px">Không</div>
<div class="c" style="left:505px;top:502px;width:63px">VND</div>
<div class="c r" style="left:569px;top:502px;width:63px">60000</div>
<div class="c r" style="left:633px;top:502px;width:63px">0</div>
<div class="c r" style="left:697px;top:502px;width:63px">0</div>
<div class="c" style="left:763px;top:502px;width:27px">###</div>
<div class="c r" style="left:791px;top:502px;width:63px">0</div>
<div class="c r" style="left:1142px;top:502px;width:152px">21-01-2024 13:38:20</div>
<div class="c" style="left:1295px;top:502px;width:50px">Anh Ngh</div>
<div class="c n" style="left:26px;top:519px;width:127px">#CSHRV108391FF</div>
<div class="c" style="left:154px;top:519px;width:22px">van</div>
<div class="c" style="left:177px;top:519px;width:36px">Đã tha</div>
<div class="c" style="left:215px;top:519px;width:33px">####</div>
<div class="c" style="left:249px;top:519px;width:63px">Huyền</div>
<div class="c" style="left:313px;top:519px;width:63px">Đã hoàn thành</div>
<div class="c" style="left:379px;top:519px;width:61px">########</div>
<div class="c" style="left:441px;top:519px;width:63px">Không</div>
<div class="c" style="left:505px;top:519px;width:63px">VND</div>
<div class="c r" style="left:569px;top:519px;width:63px">600000</div>
<div class="c r" style="left:633px;top:519px;width:63px">0</div>
<div class="c r" style="left:697px;top:519px;width:63px">0</div>
<div class="c" style="left:763px;top:519px;width:27px">###</div>
<div class="c r" style="left:791px;top:519px;width:63px">0</div>
<div class="c r" style="left:1142px;top:519px;width:152px">20-01-2024 10:05:06</div>
<div class="c" style="left:1295px;top:519px;width:50px">Anh Ngh</div>
<div class="c n" style="left:26px;top:536px;width:127px">#CSHRV108391FF</div>
<div class="c" style="left:154px;top:536px;width:22px">van</div>
<div class="c" style="left:177px;top:536px;width:36px">Đã tha</div>
<div class="c" style="left:215px;top:536px;width:33px">####</div>
<div class="c" style="left:249px;top:536px;width:63px">Huyền</div>
<div class="c" style="left:313px;top:536px;width:63px">Đã hoàn thành</div>
<div class="c" style="left:379px;top:536px;width:61px">########</div>
<div class="c" style="left:441px;top:536px;width:63px">Không</div>
<div class="c" style="left:505px;top:536px;width:63px">VND</div>
<div class="c r" style="left:569px;top:536px;width:63px">600000</div>
<div class="c r" style="left:633px;top:536px;width:63px">0</div>
<div class="c r" style="left:697px;top:536px;width:63px">0</div>
<div class="c" style="left:763px;top:536px;width:27px">###</div>
<div class="c r" style="left:791px;top:536px;width:63px">0</div>
<div class="c r" style="left:1142px;top:536px;width:152px">20-01-2024 10:05:06</div>
<div class="c" style="left:1295px;top:536px;width:50px">Anh Ngh</div>
<div class="c n" style="left:26px;top:553px;width:127px">#CSHRV108391FF</div>
<div class="c" style="left:154px;top:553px;width:22px">van</div>
<div class="c" style="left:177px;top:553px;width:36px">Đã tha</div>
<div class="c" style="left:215px;top:553px;width:33px">####</div>
<div class="c" style="left:249px;top:553px;width:63px">Huyền</div>
<div class="c" style="left:313px;top:553px;width:63px">Đã hoàn thành</div>
<div class="c" style="left:379px;top:553px;width:61px">########</div>
<div class="c" style="left:441px;top:553px;width:63px">Không</div>
<div class="c" style="left:505px;top:553px;width:63px">VND</div>
<div class="c r" style="left:569px;top:553px;width:63px">600000</div>
<div class="c r" style="left:633px;top:553px;width:63px">0</div>
<div class="c r" style="left:697px;top:553px;width:63px">0</div>
<div class="c" style="left:763px;top:553px;width:27px">###</div>
<div class="c r" style="left:791px;top:553px;width:63px">0</div>
<div class="c r" style="left:1142px;top:553px;width:152px">20-01-2024 10:05:06</div>
<div class="c" style="left:1295px;top:553px;width:50px">Anh Ngh</div>
<div class="c n" style="left:26px;top:570px;width:127px">#CSHRV108391FF</div>
<div class="c" style="left:154px;top:570px;width:22px">van</div>
<div class="c" style="left:177px;top:570px;width:36px">Đã tha</div>
<div class="c" style="left:215px;top:570px;width:33px">####</div>
<div class="c" style="left:249px;top:570px;width:63px">Huyền</div>
<div class="c" style="left:313px;top:570px;width:63px">Đã hoàn thành</div>
<div class="c" style="left:379px;top:570px;width:61px">########</div>
<div class="c" style="left:441px;top:570px;width:63px">Không</div>
<div class="c" style="left:505px;top:570px;width:63px">VND</div>
<div class="c r" style="left:569px;top:570px;width:63px">600000</div>
<div class="c r" style="left:633px;top:570px;width:63px">0</div>
<div class="c r" style="left:697px;top:570px;width:63px">0</div>
<div class="c" style="left:763px;top:570px;width:27px">###</div>
<div class="c r" style="left:791px;top:570px;width:63px">0</div>
<div class="c r" style="left:1142px;top:570px;width:152px">20-01-2024 10:05:06</div>
<div class="c" style="left:1295px;top:570px;width:50px">Anh Ngh</div>
<div class="c n" style="left:26px;top:587px;width:127px">#CSHRV108391FF</div>
<div class="c" style="left:154px;top:587px;width:22px">van</div>
<div class="c" style="left:177px;top:587px;width:36px">Đã tha</div>
<div class="c" style="left:215px;top:587px;width:33px">####</div>
<div class="c" style="left:249px;top:587px;width:63px">Huyền</div>
<div class="c" style="left:313px;top:587px;width:63px">Đã hoàn thành</div>
<div class="c" style="left:379px;top:587px;width:61px">########</div>
<div class="c" style="left:441px;top:587px;width:63px">Không</div>
<div class="c" style="left:505px;top:587px;width:63px">VND</div>
<div class="c r" style="left:569px;top:587px;width:63px">600000</div>
<div class="c r" style="left:633px;top:587px;width:63px">0</div>
<div class="c r" style="left:697px;top:587px;width:63px">0</div>
<div class="c" style="left:763px;top:587px;width:27px">###</div>
<div class="c r" style="left:791px;top:587px;width:63px">0</div>
<div class="c r" style="left:1142px;top:587px;width:152px">20-01-2024 10:05:06</div>
<div class="c" style="left:1295px;top:587px;width:50px">Anh Ngh</div>
<div class="c n" style="left:26px;top:604px;width:127px">#CSHRV108390FF</div>
<div class="c" style="left:154px;top:604px;width:22px">gue</div>
<div class="c ov" style="left:177px;top:604px;width:71px">Chờ xử lý</div>
<div class="c ov" style="left:313px;top:604px;width:127px">Chưa hoàn thành</div>
<div class="c" style="left:441px;top:604px;width:63px">Có</div>
<div class="c" style="left:505px;top:604px;width:63px">VND</div>
<div class="c r" style="left:569px;top:604px;width:63px">180000</div>
<div class="c r" style="left:633px;top:604px;width:63px">0</div>
<div class="c r" style="left:697px;top:604px;width:63px">0</div>
<div class="c" style="left:763px;top:604px;width:27px">###</div>
<div class="c r" style="left:791px;top:604px;width:63px">0</div>
<div class="c r" style="left:1142px;top:604px;width:152px">20-01-2024 07:00:29</div>
<div class="c" style="left:1295px;top:604px;width:50px">Huy</div>
<div class="c n" style="left:26px;top:621px;width:127px">#CSHRV108389FF</div>
<div class="c" style="left:154px;top:621px;width:22px">van</div>
<div class="c" style="left:177px;top:621px;width:36px">Đã tha</div>
<div class="c" style="left:215px;top:621px;width:33px">####</div>
<div class="c" style="left:249px;top:621px;width:63px">Anh Nghii</div>
<div class="c" style="left:313px;top:621px;width:63px">Đã hoàn thành</div>
<div class="c" style="left:379px;top:621px;width:61px">########</div>
<div class="c" style="left:441px;top:621px;width:63px">Không</div>
<div class="c" style="left:505px;top:621px;width:63px">VND</div>
<div class="c r" style="left:569px;top:621px;width:63px">900000</div>
<div class="c r" style="left:633px;top:621px;width:63px">0</div>
<div class="c r" style="left:697px;top:621px;width:63px">0</div>
<div class="c r" style="left:761px;top:621px;width:29px">0</div>
<div class="c r" style="left:791px;top:621px;width:63px">900000</div>
<div class="c r" style="left:1142px;top:621px;width:152px">19-01-2024 07:24:14</div>
<div class="c" style="left:1295px;top:621px;width:50px">Anh Ngh</div>
<div class="c n" style="left:26px;top:638px;width:127px">#CSHRV108388FF</div>
<div class="c" style="left:154px;top:638px;width:22px">van</div>
<div class="c" style="left:177px;top:638px;width:36px">Đã tha</div>
<div class="c" style="left:215px;top:638px;width:33px">####</div>
<div class="c" style="left:249px;top:638px;width:63px">Anh Nghii</div>
<div class="c" style="left:313px;top:638px;width:63px">Đã hoàn thành</div>
<div class="c" style="left:379px;top:638px;width:61px">########</div>
<div class="c" style="left:441px;top:638px;width:63px">Không</div>
<div class="c" style="left:505px;top:638px;width:63px">VND</div>
<div class="c r" style="left:569px;top:638px;width:63px">900000</div>
<div class="c r" style="left:633px;top:638px;width:63px">0</div>
<div class="c r" style="left:697px;top:638px;width:63px">0</div>
<div class="c" style="left:763px;top:638px;width:27px">###</div>
<div class="c r" style="left:791px;top:638px;width:63px">0</div>
<div class="c r" style="left:1142px;top:638px;width:152px">19-01-2024 07:22:45</div>
<div class="c" style="left:1295px;top:638px;width:50px">Anh Ngh</div>
<div class="c n" style="left:26px;top:655px;width:127px">#CSHRV108387FF</div>
<div class="c" style="left:154px;top:655px;width:22px">ngn</div>
<div class="c" style="left:177px;top:655px;width:36px">Nhập</div>
<div class="c" style="left:215px;top:655px;width:33px">####</div>
<div class="c" style="left:249px;top:655px;width:63px">Anh Nghii</div>
<div class="c" style="left:313px;top:655px;width:63px">Đã hoàn thành</div>
<div class="c" style="left:379px;top:655px;width:61px">########</div>
<div class="c" style="left:441px;top:655px;width:63px">Không</div>
<div class="c" style="left:505px;top:655px;width:63px">VND</div>
<div class="c r" style="left:569px;top:655px;width:63px">300000</div>
<div class="c r" style="left:633px;top:655px;width:63px">0</div>
<div class="c r" style="left:697px;top:655px;width:63px">0</div>
<div class="c" style="left:763px;top:655px;width:27px">###</div>
<div class="c r" style="left:791px;top:655px;width:63px">0</div>
<div class="c r" style="left:1142px;top:655px;width:152px">18-01-2024 08:08:07</div>
<div class="c" style="left:1295px;top:655px;width:50px">Anh Ngh</div>
<div class="c n" style="left:26px;top:672px;width:127px">#CSHRV108387FF</div>
<div class="c" style="left:154px;top:672px;width:22px">ngn</div>
<div class="c" style="left:177px;top:672px;width:36px">Nhập</div>
<div class="c" style="left:215px;top:672px;width:33px">####</div>
<div class="c" style="left:249px;top:672px;width:63px">Anh Nghii</div>
<div class="c" style="left:313px;top:672px;width:63px">Đã hoàn thành</div>
<div class="c" style="left:379px;top:672px;width:61px">########</div>
<div class="c" style="left:441px;top:672px;width:63px">Không</div>
<div class="c" style="left:505px;top:672px;width:63px">VND</div>
<div class="c r" style="left:569px;top:672px;width:63px">300000</div>
<div class="c r" style="left:633px;top:672px;width:63px">0</div>
<div class="c r" style="left:697px;top:672px;width:63px">0</div>
<div class="c" style="left:763px;top:672px;width:27px">###</div>
<div class="c r" style="left:791px;top:672px;width:63px">0</div>
<div class="c r" style="left:1142px;top:672px;width:152px">18-01-2024 08:08:07</div>
<div class="c" style="left:1295px;top:672px;width:50px">Anh Ngh</div>
<div class="c r" style="left:1015px;top:230px;width:126px">24-01-2024 16:17:54</div>
<div class="ch" style="left:26px;width:127px">A</div>
<div class="ch" style="left:154px;width:22px">B</div>
<div class="ch" style="left:177px;width:36px">C</div>
<div class="ch" style="left:214px;width:34px">D</div>
<div class="ch" style="left:249px;width:63px">E</div>
<div class="ch" style="left:313px;width:63px">F</div>
<div class="ch" style="left:377px;width:63px">G</div>
<div class="ch" style="left:441px;width:63px">H</div>
<div class="ch" style="left:505px;width:63px">I</div>
<div class="ch" style="left:569px;width:63px">J</div>
<div class="ch" style="left:633px;width:63px">K</div>
<div class="ch" style="left:697px;width:63px">L</div>
<div class="ch" style="left:761px;width:29px">M</div>
<div class="ch" style="left:791px;width:63px">O</div>
<div class="ch" style="left:855px;width:159px">P</div>
<div class="ch" style="left:1015px;width:126px">Q</div>
<div class="ch" style="left:1142px;width:152px">R</div>
<div class="ch" style="left:1295px;width:63px">S</div>
<div class="rh" style="top:213px">1</div>
<div class="rh" style="top:230px">2</div>
<div class="rh" style="top:247px">3</div>
<div class="rh" style="top:264px">4</div>
<div class="rh" style="top:281px">5</div>
<div class="rh" style="top:298px">6</div>
<div class="rh" style="top:315px">7</div>
<div class="rh" style="top:332px">8</div>
<div class="rh" style="top:349px">9</div>
<div class="rh" style="top:366px">10</div>
<div class="rh" style="top:383px">11</div>
<div class="rh" style="top:400px">12</div>
<div class="rh" style="top:417px">13</div>
<div class="rh" style="top:434px">14</div>
<div class="rh" style="top:451px">15</div>
<div class="rh" style="top:468px">16</div>
<div class="rh" style="top:485px">17</div>
<div class="rh" style="top:502px">18</div>
<div class="rh" style="top:519px">19</div>
<div class="rh" style="top:536px">20</div>
<div class="rh" style="top:553px">21</div>
<div class="rh" style="top:570px">22</div>
<div class="rh" style="top:587px">23</div>
<div class="rh" style="top:604px">24</div>
<div class="rh" style="top:621px">25</div>
<div class="rh" style="top:638px">26</div>
<div class="rh" style="top:655px">27</div>
<div class="rh" style="top:672px">28</div>
<!-- vertical scrollbar -->
<div class="a" style="left:1345px;top:195px;width:19px;height:494px;background:#e6e6e6"></div>
<div class="a" style="left:1349.500px;top:213px;width:13px;height:462px;background:#d6d6da"></div>
<div class="box" style="left:1348px;top:198px;width:15px;height:15px;border-color:#ababab"></div>
<svg class="a" style="left:1352px;top:203px" width="7" height="4" viewBox="0 0 7 4"><path d="M0 4l3.500-4 3.500 4z" fill="#6e6e6e"/></svg>
<div class="box" style="left:1348px;top:213px;width:15px;height:403px;border-color:#a6a6b4"></div>
<div class="box" style="left:1348px;top:674px;width:15px;height:15px;border-color:#ababab"></div>
<svg class="a" style="left:1352px;top:679.500px" width="7" height="4" viewBox="0 0 7 4"><path d="M0 0l3.500 4 3.500-4z" fill="#6e6e6e"/></svg>
</div>
<!-- sheet tab bar -->
<div class="a" style="left:0;top:689px;width:1364px;height:28px;background:#e6e6e6"></div>
<svg class="a" style="left:27px;top:697.500px" width="4" height="7" viewBox="0 0 4 7"><path d="M4 0v7L0 3.500z" fill="#c3c3c3"/></svg>
<svg class="a" style="left:56.500px;top:697.500px" width="4" height="7" viewBox="0 0 4 7"><path d="M0 0v7l4-3.500z" fill="#c3c3c3"/></svg>
<div class="a" style="left:100px;top:688px;width:65px;height:24.500px;background:#fff;border-bottom:2px solid #1e6b41;border-left:1px solid #c9c9c9;border-right:1px solid #c9c9c9"></div>
<div class="t" style="left:112.40px;top:695.00px;letter-spacing:-0.288px;font-size:12.5px;font-weight:bold;color:#217346">Sheet1</div>
<svg class="a" style="left:197.500px;top:693.500px" width="17" height="17" viewBox="0 0 17 17"><circle cx="8.500" cy="8.500" r="7.400" fill="none" stroke="#6e6e6e" stroke-width="1.100"/><path d="M8.500 4.500v8M4.500 8.500h8" stroke="#6e6e6e" stroke-width="1.400"/></svg>
<div class="a" style="left:819px;top:697.500px;width:1.500px;height:1.500px;background:#b0b0b0;box-shadow:0 3.700px 0 #b0b0b0,0 7.400px 0 #b0b0b0"></div>
<div class="a" style="left:836px;top:695px;width:509px;height:14px;background:#d6d6da"></div>
<div class="box" style="left:836px;top:695px;width:15px;height:15px;border-color:#ababab"></div>
<svg class="a" style="left:840.500px;top:698.500px" width="5" height="8" viewBox="0 0 5 8"><path d="M5 0v8L.5 4z" fill="#5e5e5e"/></svg>
<div class="box" style="left:851px;top:695px;width:122px;height:15px;border-color:#a6a6b4"></div>
<div class="box" style="left:1330px;top:695px;width:15px;height:15px;border-color:#ababab"></div>
<svg class="a" style="left:1336px;top:698.500px" width="5" height="8" viewBox="0 0 5 8"><path d="M0 0v8l4.500-4z" fill="#5e5e5e"/></svg>
<!-- status bar -->
<div class="a" style="left:0;top:716px;width:1364px;height:20px;background:#f2f2f2;border-top:1px solid #c8c8c8"></div>
<div class="t" style="left:7.50px;top:720.00px;letter-spacing:-1.147px;color:#555">Ready</div>
<svg class="a" style="left:58px;top:720px" width="14" height="13" viewBox="0 0 14 13"><rect x="2.500" y="2" width="10.500" height="10.500" fill="#fff" stroke="#777"/><path d="M2.500 5h10.500" stroke="#777"/><path d="M4.500 7.500h2.500M8.500 7.500h2.500M4.500 10h2.500M8.500 10h2.500" stroke="#777" stroke-width="1.200"/><circle cx="3" cy="3" r="2.800" fill="#777"/></svg>
<div class="a" style="left:1074px;top:717px;width:38px;height:19px;background:#c8c8c8"></div>
<svg class="a" style="left:1086.500px;top:720px" width="13" height="13" viewBox="0 0 13 13"><rect x=".5" y=".5" width="12" height="12" fill="none" stroke="#5e5e5e"/><path d="M.5 4.500h12M.5 8.500h12M4.500 .5v12M8.500 .5v12" stroke="#5e5e5e"/></svg>
<svg class="a" style="left:1124.500px;top:720px" width="13" height="13" viewBox="0 0 13 13"><rect x=".5" y=".5" width="12" height="12" fill="none" stroke="#6e6e6e"/><rect x="3.500" y="3.500" width="6" height="6" fill="none" stroke="#6e6e6e"/><path d="M5 5.500h3M5 7.500h3" stroke="#6e6e6e" stroke-width=".8"/></svg>
<svg class="a" style="left:1162px;top:720px" width="14" height="13" viewBox="0 0 14 13"><rect x=".5" y=".5" width="13" height="12" fill="none" stroke="#6e6e6e"/><path d="M.5 7.500h13M4.500 .5v7M8.500 .5v4h5" stroke="#6e6e6e" fill="none"/></svg>
<div class="a" style="left:1193.300px;top:725.300px;width:5.500px;height:2px;background:#555"></div>
<div class="a" style="left:1203px;top:725.500px;width:100px;height:1px;background:#9a9a9a"></div>
<div class="a" style="left:1251.400px;top:721px;width:3.600px;height:11px;background:#555"></div>
<div class="a" style="left:1307px;top:725.800px;width:8px;height:2px;background:#555"></div>
<div class="a" style="left:1310px;top:722.800px;width:2px;height:8px;background:#555"></div>
<div class="t" style="left:1330.80px;top:720.00px;letter-spacing:-1.607px;color:#555">100%</div>
<svg class="a" style="left:1113px;top:239px" width="14" height="21" viewBox="0 0 14 21"><path d="M1 1v16l4-3.500 2.700 6.300 2.600-1.100-2.700-6.200H13z" fill="#fff" stroke="#000" stroke-width="1.100" stroke-linejoin="round"/></svg>
</body></html>
